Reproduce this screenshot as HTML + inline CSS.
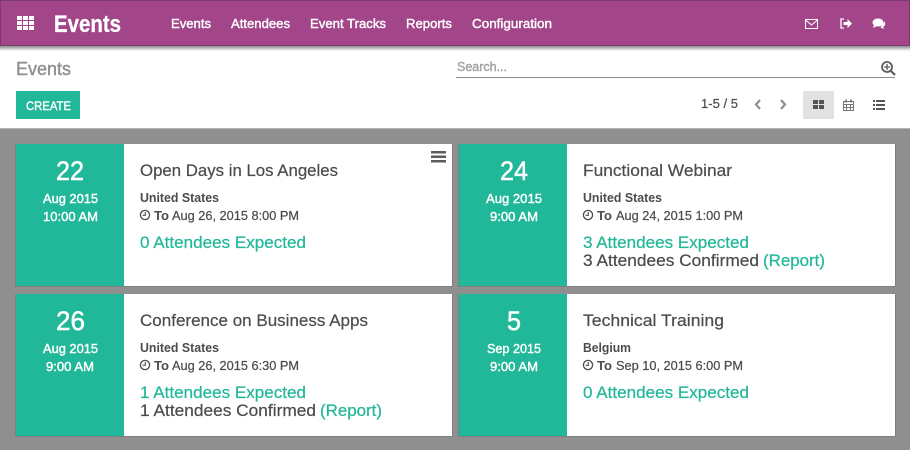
<!DOCTYPE html>
<html><head><meta charset="utf-8"><style>
html,body{margin:0;padding:0;background:#8f8f8f}
svg{display:block}
text{font-family:"Liberation Sans",sans-serif;fill:#4c4c4c;stroke:#4c4c4c;stroke-width:.22px}
.w{fill:#fff;stroke:#fff}
.b{font-weight:bold;stroke-width:0}
.nav{fill:#fff;stroke:#fff;stroke-width:.4px;font-size:13px}
.d{fill:#fff;stroke:#fff;stroke-width:.5px;font-size:27px}
.m{fill:#fff;stroke:#fff;stroke-width:.42px;font-size:13px}
.t{font-size:17px}
.c{font-weight:bold;font-size:12.5px;stroke-width:0}
.s{font-size:12.5px}
.a{font-size:17px;fill:#21b799;stroke:#21b799}
.o{font-size:17px}
.g{fill:#8f8f8f;stroke:#8f8f8f;stroke-width:.4px}
.h{fill:#a0a0a0;stroke:#a0a0a0;stroke-width:.4px}
</style></head><body>
<svg width="910" height="450" viewBox="0 0 910 450" xmlns="http://www.w3.org/2000/svg">
<defs><linearGradient id="sh" x1="0" y1="0" x2="0" y2="1"><stop offset="0" stop-color="#8a8a8a"/><stop offset="1" stop-color="#fff"/></linearGradient>
<g id="clk"><circle cx="0" cy="0" r="4.6" fill="none" stroke="#4c4c4c" stroke-width="1.3"/><path d="M0.300-3V0.300H-2.400" fill="none" stroke="#4c4c4c" stroke-width="1.1"/></g></defs>
<rect width="910" height="450" fill="#8f8f8f"/>
<rect y="46" width="910" height="83" fill="#fff"/>
<rect y="46" width="910" height="5" fill="url(#sh)"/>
<rect y="128" width="910" height="1" fill="#b5b5b5"/>
<rect width="910" height="46" fill="#a24689"/>
<rect x="0.500" y="0.500" width="909" height="45" fill="none" stroke="#7d3a6c"/>
<!-- apps -->
<g fill="#fff"><rect x="17" y="16" width="5" height="4"/><rect x="23" y="16" width="5" height="4"/><rect x="29" y="16" width="5" height="4"/><rect x="17" y="21" width="5" height="4"/><rect x="23" y="21" width="5" height="4"/><rect x="29" y="21" width="5" height="4"/><rect x="17" y="26" width="5" height="4"/><rect x="23" y="26" width="5" height="4"/><rect x="29" y="26" width="5" height="4"/></g>
<text x="54" y="32" class="w b" font-size="24" style="stroke-width:.3px" textLength="67" lengthAdjust="spacingAndGlyphs">Events</text>
<text x="171" y="28" class="nav" textLength="40" lengthAdjust="spacingAndGlyphs">Events</text>
<text x="231" y="28" class="nav" textLength="59" lengthAdjust="spacingAndGlyphs">Attendees</text>
<text x="310" y="28" class="nav" textLength="76" lengthAdjust="spacingAndGlyphs">Event Tracks</text>
<text x="406" y="28" class="nav" textLength="46" lengthAdjust="spacingAndGlyphs">Reports</text>
<text x="472" y="28" class="nav" textLength="80" lengthAdjust="spacingAndGlyphs">Configuration</text>
<!-- systray -->
<path d="M805.500 19.500h12v9h-12zM805.500 20l6 5 6-5" fill="none" stroke="#fff" stroke-width="1"/>
<path d="M844 19h-3v9h3" fill="none" stroke="#fff" stroke-width="1.300"/><path d="M843.500 22h4v-3l4.500 4.500-4.500 4.500v-3h-4z" fill="#fff"/>
<ellipse cx="878" cy="22.500" rx="5.500" ry="4" fill="#fff"/><path d="M874 25l-1 3 4-2zM884.500 21.500c1.500 2 .5 4.500-1.500 5.500l1.500 2-4-1.500z" fill="#fff"/>
<!-- control panel -->
<text x="16" y="75" font-size="18" class="g" textLength="55" lengthAdjust="spacingAndGlyphs">Events</text>
<text x="457" y="71" font-size="13" class="h" textLength="50" lengthAdjust="spacingAndGlyphs">Search...</text>
<rect x="456" y="77" width="439" height="1" fill="#8c8c8c"/>
<circle cx="887" cy="67" r="5" fill="none" stroke="#5c5c5c" stroke-width="1.800"/><path d="M891 71l4 4" stroke="#5c5c5c" stroke-width="2.200"/><path d="M884 67h6M887 64v6" stroke="#5c5c5c" stroke-width="1.300"/>
<rect x="16" y="91" width="64" height="28" fill="#21b799"/>
<text x="26" y="110" class="w" font-size="12" style="stroke-width:.4px" textLength="45" lengthAdjust="spacingAndGlyphs">CREATE</text>
<text x="701" y="108" font-size="13" textLength="37" lengthAdjust="spacingAndGlyphs">1-5 / 5</text>
<path d="M760 100l-4 4.500 4 4.500M781 100l4 4.500-4 4.500" fill="none" stroke="#8f8f8f" stroke-width="2.200"/>
<rect x="803" y="91" width="31" height="28" fill="#e2e2e2"/>
<g fill="#555"><rect x="813" y="100" width="5" height="4"/><rect x="819" y="100" width="5" height="4"/><rect x="813" y="105" width="5" height="4"/><rect x="819" y="105" width="5" height="4"/></g>
<path d="M843.500 101.500h10v9h-10zM843.500 104.500h10M843.500 107.500h10M846.500 104.500v6M850.500 104.500v6" fill="none" stroke="#777" stroke-width="1"/><path d="M846 99.500v3M851 99.500v3" stroke="#666" stroke-width="1.500"/>
<g fill="#555"><rect x="873" y="100" width="2" height="2"/><rect x="873" y="104" width="2" height="2"/><rect x="873" y="108" width="2" height="2"/><rect x="876" y="100" width="9" height="2"/><rect x="876" y="104" width="9" height="2"/><rect x="876" y="108" width="9" height="2"/></g>
<!-- cards -->
<g fill="#808080"><rect x="15" y="144" width="438" height="143"/><rect x="458" y="144" width="438" height="143"/><rect x="15" y="294" width="438" height="143"/><rect x="458" y="294" width="438" height="143"/></g>
<g fill="#fff"><rect x="16" y="144" width="436" height="142"/><rect x="459" y="144" width="436" height="142"/><rect x="16" y="294" width="436" height="142"/><rect x="459" y="294" width="436" height="142"/></g>
<g fill="#21b799"><rect x="16" y="144" width="108" height="142"/><rect x="459" y="144" width="108" height="142"/><rect x="16" y="294" width="108" height="142"/><rect x="459" y="294" width="108" height="142"/></g>
<g fill="#5c5c5c"><rect x="431" y="151" width="15" height="2.500"/><rect x="431" y="155.500" width="15" height="2.500"/><rect x="431" y="160" width="15" height="2.500"/></g>
<!-- card 1 -->
<text x="56" y="180" class="d" textLength="28" lengthAdjust="spacingAndGlyphs">22</text>
<text x="43" y="203" class="m" textLength="55" lengthAdjust="spacingAndGlyphs">Aug 2015</text>
<text x="43" y="221" class="m" textLength="55" lengthAdjust="spacingAndGlyphs">10:00 AM</text>
<text x="140" y="176" class="t" textLength="198" lengthAdjust="spacingAndGlyphs">Open Days in Los Angeles</text>
<text x="140" y="202" class="c" textLength="79" lengthAdjust="spacingAndGlyphs">United States</text>
<use href="#clk" x="145" y="215"/>
<text x="154" y="220" class="c" textLength="15" lengthAdjust="spacingAndGlyphs">To</text>
<text x="172" y="220" class="s" textLength="127" lengthAdjust="spacingAndGlyphs">Aug 26, 2015 8:00 PM</text>
<text x="140" y="248" class="a" textLength="166" lengthAdjust="spacingAndGlyphs">0 Attendees Expected</text>
<!-- card 2 -->
<text x="500" y="180" class="d" textLength="28" lengthAdjust="spacingAndGlyphs">24</text>
<text x="486" y="203" class="m" textLength="56" lengthAdjust="spacingAndGlyphs">Aug 2015</text>
<text x="490" y="221" class="m" textLength="48" lengthAdjust="spacingAndGlyphs">9:00 AM</text>
<text x="583" y="176" class="t" textLength="149" lengthAdjust="spacingAndGlyphs">Functional Webinar</text>
<text x="583" y="202" class="c" textLength="79" lengthAdjust="spacingAndGlyphs">United States</text>
<use href="#clk" x="588" y="215"/>
<text x="597" y="220" class="c" textLength="15" lengthAdjust="spacingAndGlyphs">To</text>
<text x="616" y="220" class="s" textLength="127" lengthAdjust="spacingAndGlyphs">Aug 24, 2015 1:00 PM</text>
<text x="583" y="248" class="a" textLength="166" lengthAdjust="spacingAndGlyphs">3 Attendees Expected</text>
<text x="583" y="266" class="o" textLength="176" lengthAdjust="spacingAndGlyphs">3 Attendees Confirmed</text>
<text x="763" y="266" class="a" textLength="62" lengthAdjust="spacingAndGlyphs">(Report)</text>
<!-- card 3 -->
<text x="56" y="330" class="d" textLength="29" lengthAdjust="spacingAndGlyphs">26</text>
<text x="43" y="353" class="m" textLength="55" lengthAdjust="spacingAndGlyphs">Aug 2015</text>
<text x="46" y="371" class="m" textLength="48" lengthAdjust="spacingAndGlyphs">9:00 AM</text>
<text x="140" y="326" class="t" textLength="228" lengthAdjust="spacingAndGlyphs">Conference on Business Apps</text>
<text x="140" y="352" class="c" textLength="79" lengthAdjust="spacingAndGlyphs">United States</text>
<use href="#clk" x="145" y="365"/>
<text x="154" y="370" class="c" textLength="15" lengthAdjust="spacingAndGlyphs">To</text>
<text x="172" y="370" class="s" textLength="127" lengthAdjust="spacingAndGlyphs">Aug 26, 2015 6:30 PM</text>
<text x="140" y="398" class="a" textLength="166" lengthAdjust="spacingAndGlyphs">1 Attendees Expected</text>
<text x="140" y="416" class="o" textLength="176" lengthAdjust="spacingAndGlyphs">1 Attendees Confirmed</text>
<text x="320" y="416" class="a" textLength="62" lengthAdjust="spacingAndGlyphs">(Report)</text>
<!-- card 4 -->
<text x="507" y="330" class="d" textLength="14" lengthAdjust="spacingAndGlyphs">5</text>
<text x="487" y="353" class="m" textLength="54" lengthAdjust="spacingAndGlyphs">Sep 2015</text>
<text x="490" y="371" class="m" textLength="48" lengthAdjust="spacingAndGlyphs">9:00 AM</text>
<text x="583" y="326" class="t" textLength="141" lengthAdjust="spacingAndGlyphs">Technical Training</text>
<text x="583" y="352" class="c" textLength="48" lengthAdjust="spacingAndGlyphs">Belgium</text>
<use href="#clk" x="588" y="365"/>
<text x="597" y="370" class="c" textLength="15" lengthAdjust="spacingAndGlyphs">To</text>
<text x="616" y="370" class="s" textLength="127" lengthAdjust="spacingAndGlyphs">Sep 10, 2015 6:00 PM</text>
<text x="583" y="398" class="a" textLength="166" lengthAdjust="spacingAndGlyphs">0 Attendees Expected</text>
</svg>
</body></html>
